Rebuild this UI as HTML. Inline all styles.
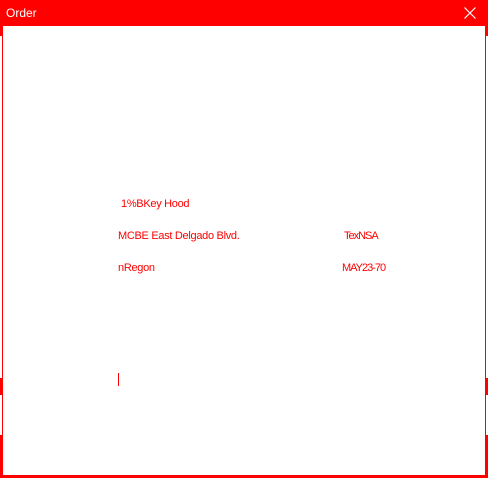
<!DOCTYPE html><html><head><style>
body{margin:0;width:488px;height:478px;background:#fff;position:relative;overflow:hidden;font-family:"Liberation Sans",sans-serif}
.r{position:absolute;background:#f00}
.t{position:absolute;color:#f00;font-size:11px;line-height:14px;white-space:nowrap;letter-spacing:-0.3px}
</style></head><body>
<div class="r" style="left:0;top:0;width:488px;height:26px"></div>
<div class="t" style="left:6px;top:6px;color:#fff;font-size:12px;letter-spacing:0">Order</div>
<svg style="position:absolute;left:464px;top:7px" width="12" height="12"><path d="M0.5 0.5L11.5 11.5M11.5 0.5L0.5 11.5" stroke="#fff" stroke-width="1.2"/></svg>
<div class="r" style="left:0;top:26px;width:3px;height:10px"></div>
<div class="r" style="left:2px;top:26px;width:1px;height:452px"></div>
<div class="r" style="left:485px;top:26px;width:3px;height:10px"></div>
<div class="r" style="left:485px;top:26px;width:1px;height:452px"></div>
<div class="r" style="left:0;top:378px;width:3px;height:17px"></div>
<div class="r" style="left:485px;top:378px;width:3px;height:17px"></div>
<div class="r" style="left:0;top:435px;width:3px;height:43px"></div>
<div class="r" style="left:485px;top:435px;width:3px;height:43px"></div>
<div class="r" style="left:0;top:475px;width:488px;height:3px"></div>
<div class="t" style="left:121px;top:197px">1%BKey Hood</div>
<div class="t" style="left:118px;top:229px">MCBE East Delgado Blvd.</div>
<div class="t" style="left:344px;top:229px;letter-spacing:-1px">TexNSA</div>
<div class="t" style="left:118px;top:261px">nRegon</div>
<div class="t" style="left:342px;top:261px;letter-spacing:-1px">MAY23-70</div>
<div class="r" style="left:118px;top:373px;width:1px;height:13px"></div>
</body></html>
